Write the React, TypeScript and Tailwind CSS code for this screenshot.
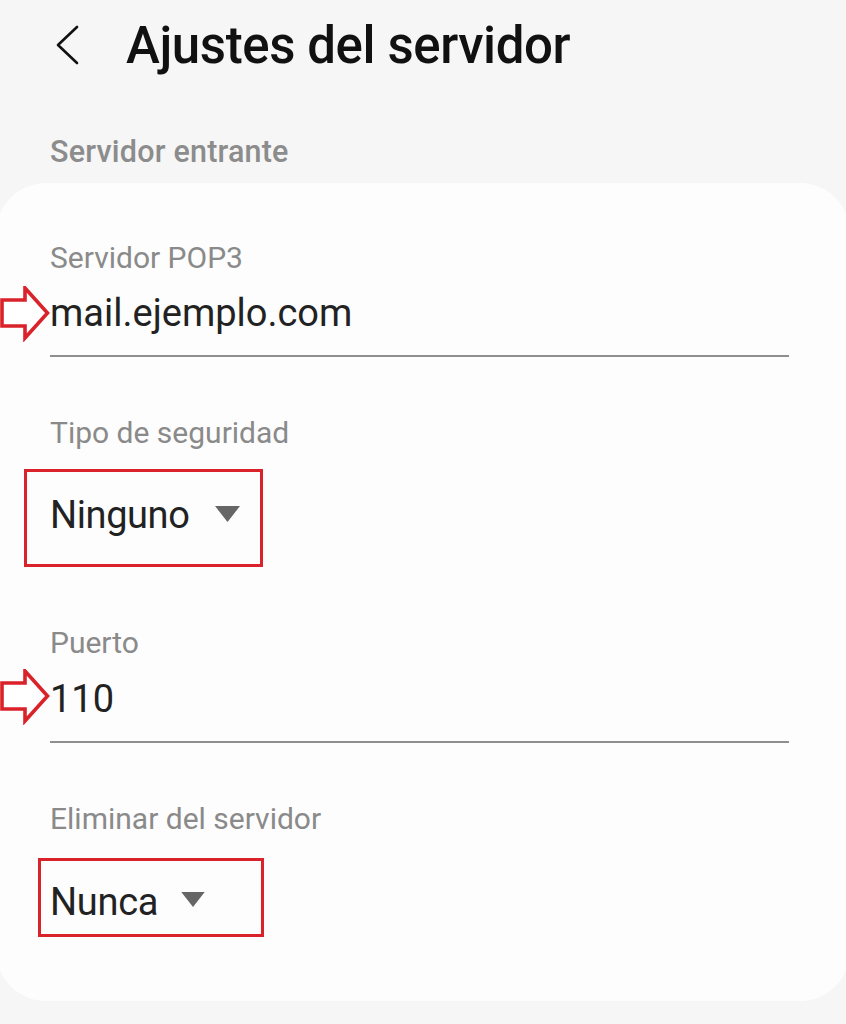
import React from "react";

const font = { fontFamily: "Roboto, 'Noto Sans', sans-serif" };

function Arrow({ className }: { className: string }) {
  return (
    <svg
      className={`absolute left-0 ${className}`}
      width="52"
      height="56"
      viewBox="0 0 52 56"
      fill="none"
    >
      <path
        d="M2 14 H25 V2 L47.5 27 L25 52 V40 H2 Z"
        fill="#ffffff"
        stroke="#d9222a"
        strokeWidth="3.6"
        strokeLinejoin="miter"
      />
    </svg>
  );
}

function Caret({ className }: { className: string }) {
  return (
    <svg className={className} viewBox="0 0 25 16" fill="#666666">
      <path d="M0 0 H25 L12.5 16 Z" />
    </svg>
  );
}

function Label({ children, className = "" }: { children: React.ReactNode; className?: string }) {
  return (
    <div className={`text-[30px] leading-[36px] text-[#8a8a8a] ${className}`}>{children}</div>
  );
}

function Value({ children, className = "" }: { children: React.ReactNode; className?: string }) {
  return (
    <div className={`text-[38px] leading-[46px] text-[#222222] ${className}`}>{children}</div>
  );
}

export default function App() {
  return (
    <div
      className="relative w-[846px] h-[1024px] overflow-hidden bg-[#f6f6f6]"
      style={font}
    >
      <header className="flex items-center h-[60px] mt-[16px]">
        <svg
          className="ml-[54px] mt-[-2px]"
          width="26"
          height="40"
          viewBox="0 0 26 40"
          fill="none"
        >
          <path
            d="M23 2 L4 20 L23 38"
            stroke="#111111"
            strokeWidth="2.6"
            strokeLinecap="round"
            strokeLinejoin="round"
          />
        </svg>
        <h1 className="ml-[46px] text-[51px] leading-[60px] font-medium text-[#111111] tracking-[-0.4px]">
          Ajustes del servidor
        </h1>
      </header>

      <div className="mt-[58px] pl-[50px] text-[30.5px] leading-[36px] font-medium text-[#8c8c8c] tracking-[0.2px]">
        Servidor entrante
      </div>

      <section className="mt-[13px] ml-[-4px] w-[854px] h-[818px] rounded-[50px] bg-[#fdfdfd] pl-[54px] pr-[61px] pt-[57px]">
        <Label>Servidor POP3</Label>
        <Value className="mt-[14px]">mail.ejemplo.com</Value>
        <div className="mt-[19px] h-[2px] bg-[#8f8f8f]" />

        <Label className="mt-[58px]">Tipo de seguridad</Label>
        <div className="mt-[18px] ml-[-26px] w-[239px] h-[98px] border-[3px] border-[#d9222a] flex pl-[23px] pt-[20px]">
          <Value className="tracking-[-0.4px]">Ninguno</Value>
          <Caret className="ml-[26px] mt-[14px] w-[25px] h-[16px]" />
        </div>

        <Label className="mt-[58px]">Puerto</Label>
        <Value className="mt-[15px]">110</Value>
        <div className="mt-[19px] h-[2px] bg-[#8f8f8f]" />

        <Label className="mt-[58px]">Eliminar del servidor</Label>
        <div className="mt-[21px] ml-[-12px] w-[226px] h-[79px] border-[3px] border-[#d9222a] flex pl-[9px] pt-[18px]">
          <Value className="tracking-[-0.3px]">Nunca</Value>
          <Caret className="ml-[23px] mt-[13px] w-[24px] h-[15px]" />
        </div>
      </section>

      <Arrow className="top-[286px]" />
      <Arrow className="top-[669px]" />
    </div>
  );
}
